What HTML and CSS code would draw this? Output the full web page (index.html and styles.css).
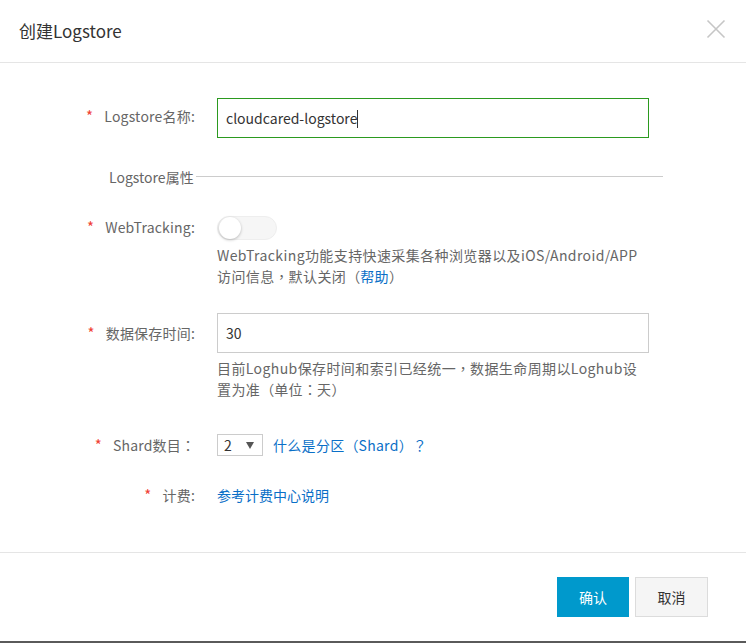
FILE: index.html
```html
<!DOCTYPE html>
<html lang="zh">
<head>
<meta charset="utf-8">
<title>创建Logstore</title>
<link rel="stylesheet" href="styles.css">
</head>
<body>
<div class="dialog">
  <div class="dialog-header">
    <div class="dialog-title">创建Logstore</div>
    <button class="close-btn" aria-label="关闭">
      <svg width="20" height="20" viewBox="0 0 20 20"><path d="M1.5 1.5 L18.5 18.5 M18.5 1.5 L1.5 18.5" stroke="#c6c6c6" stroke-width="1.6" fill="none"/></svg>
    </button>
  </div>
  <div class="dialog-body">
    <div class="row row-name">
      <div class="label"><span class="req">*</span>Logstore名称:</div>
      <div class="control">
        <div class="input input-active">cloudcared-logstore<span class="caret"></span></div>
      </div>
    </div>
    <div class="section">
      <span class="section-title">Logstore属性</span>
      <span class="section-line"></span>
    </div>
    <div class="row row-switch">
      <div class="label"><span class="req">*</span>WebTracking:</div>
      <div class="control">
        <div class="switch"><span class="knob"></span></div>
        <div class="help">WebTracking功能支持快速采集各种浏览器以及iOS/Android/APP<br>访问信息<span class="p">，</span>默认关闭<span class="p">（</span><a class="link">帮助</a><span class="p">）</span></div>
      </div>
    </div>
    <div class="row row-ttl">
      <div class="label"><span class="req">*</span>数据保存时间:</div>
      <div class="control">
        <div class="input">30</div>
        <div class="help">目前Loghub保存时间和索引已经统一<span class="p">，</span>数据生命周期以Loghub设<br>置为准<span class="p">（</span>单位<span class="p">：</span>天<span class="p">）</span></div>
      </div>
    </div>
    <div class="row row-shard">
      <div class="label"><span class="req">*</span>Shard数目<span class="p">：</span></div>
      <div class="control inline">
        <div class="select"><span>2</span><span class="arrow"></span></div>
        <a class="link shard-link">什么是分区<span class="p">（</span>Shard<span class="p">）</span><span class="p">？</span></a>
      </div>
    </div>
    <div class="row row-fee">
      <div class="label"><span class="req">*</span>计费:</div>
      <div class="control">
        <a class="link">参考计费中心说明</a>
      </div>
    </div>
  </div>
  <div class="dialog-footer">
    <button class="btn btn-primary">确认</button>
    <button class="btn btn-default">取消</button>
  </div>
</div>
</body>
</html>
```
FILE: styles.css
```css
* { box-sizing: border-box; }
html, body { margin: 0; padding: 0; background: #fff; }
body {
  font-family: "Noto Sans CJK SC", "Noto Sans", sans-serif;
  font-size: 14px;
  color: #666;
}
.p {
  font-family: "Noto Sans CJK TC", "Noto Sans CJK SC", sans-serif;
  font-feature-settings: "chws" 0, "halt" 0, "palt" 0;
  display: inline-block;
  width: 14px;
  text-align: center;
}
.dialog {
  width: 746px;
  height: 643px;
  display: flex;
  flex-direction: column;
  border-bottom: 2px solid #5a5a5a;
}
.dialog-header {
  height: 63px;
  flex: none;
  border-bottom: 1px solid #e5e5e5;
  display: flex;
  align-items: center;
  justify-content: space-between;
  padding: 0 20px 1px 19px;
}
.dialog-title {
  font-size: 17px;
  color: #333;
  line-height: 24px;
}
.close-btn {
  border: 0;
  background: none;
  padding: 0;
  width: 20px;
  height: 20px;
  margin-top: -4px;
  display: flex;
}
.dialog-body {
  flex: 1;
  padding-top: 35px;
}
.row {
  display: grid;
  grid-template-columns: 195px 432px;
  column-gap: 22px;
}
.label {
  text-align: right;
  line-height: 20px;
  color: #666;
  white-space: nowrap;
  letter-spacing: 0.2px;
}
.req {
  color: #f04134;
  margin-right: 11px;
  font-size: 15px;
}
.control.inline {
  display: flex;
  align-items: center;
}
.row-name .label { padding-top: 8px; }
.input {
  height: 40px;
  border: 1px solid #ccc;
  padding: 0 8px;
  line-height: 38px;
  color: #333;
  font-size: 14px;
}
.input-active { border-color: #2b9a1f; }
.caret {
  display: inline-block;
  width: 1px;
  height: 18px;
  background: #333;
  vertical-align: -4px;
}
.section {
  display: flex;
  align-items: center;
  margin-top: 29px;
  padding-left: 109px;
  padding-right: 83px;
  height: 20px;
}
.section-title { color: #666; line-height: 20px; }
.section-line {
  flex: 1;
  height: 1px;
  background: #ccc;
  margin-left: 2px;
  margin-top: -1px;
}
.row-switch { margin-top: 29px; }
.row-switch .label { padding-top: 0; line-height: 22px; }
.switch {
  width: 60px;
  height: 24px;
  border-radius: 12px;
  background: #f6f6f6;
  border: 1px solid #eeeeee;
  position: relative;
}
.knob {
  position: absolute;
  left: 1px;
  top: 0px;
  width: 22px;
  height: 22px;
  border-radius: 50%;
  background: #fff;
  box-shadow: 0 1px 3px rgba(0,0,0,0.25);
}
.help {
  margin-top: 5px;
  line-height: 21px;
  color: #666;
  white-space: nowrap;
  letter-spacing: 0.4px;
}
.help .p { letter-spacing: 0; }
.row-ttl { margin-top: 26px; }
.row-ttl .label { padding-top: 10px; }
.link { color: #0a6fc7; text-decoration: none; cursor: pointer; }
.row-shard { margin-top: 34px; }
.row-shard .label { line-height: 22px; }
.select {
  width: 46px;
  height: 22px;
  border: 1px solid #ccc;
  display: flex;
  align-items: center;
  justify-content: space-between;
  padding: 0 8px 0 6px;
  color: #333;
  font-size: 14px;
  line-height: 20px;
}
.arrow {
  width: 0; height: 0;
  border-left: 4px solid transparent;
  border-right: 4px solid transparent;
  border-top: 7px solid #555;
}
.shard-link { margin-left: 10px; line-height: 22px; letter-spacing: 0.3px; }
.shard-link .p { letter-spacing: 0; }
.row-fee { margin-top: 29px; }
.dialog-footer {
  height: 89px;
  flex: none;
  border-top: 1px solid #e5e5e5;
  display: flex;
  justify-content: flex-end;
  align-items: center;
  gap: 6px;
  padding-right: 38px;
}
.btn {
  height: 40px;
  width: 72px;
  font-family: inherit;
  font-size: 14px;
  border: 1px solid transparent;
  padding: 0;
}
.btn-primary { background: #0099cc; color: #fff; border-color: #0099cc; }
.btn-default { background: #f5f5f5; color: #333; border-color: #dcdcdc; width: 73px; }
```
